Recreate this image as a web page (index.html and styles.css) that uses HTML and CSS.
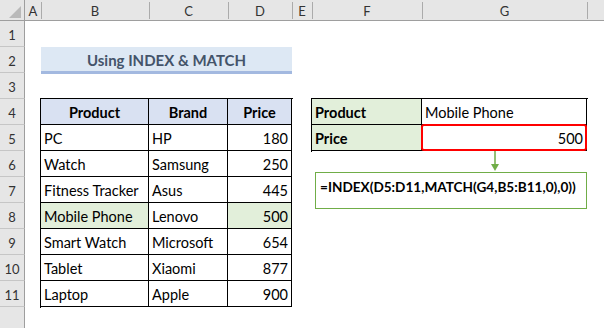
FILE: index.html
```html
<!DOCTYPE html>
<html>
<head>
<meta charset="utf-8">
<link rel="stylesheet" href="styles.css">
</head>
<body>
<div class="sheet">
  <div class="corner"><svg width="25" height="21" viewBox="0 0 25 21"><polygon points="21,6 21,18 9,18" fill="#b9b9b9"/></svg></div>
  <div class="ch">A</div>
  <div class="ch">B</div>
  <div class="ch">C</div>
  <div class="ch">D</div>
  <div class="ch">E</div>
  <div class="ch">F</div>
  <div class="ch">G</div>
  <div class="ch last"></div>

  <div class="rh r1">1</div>
  <div class="rh r2">2</div>
  <div class="rh r3">3</div>
  <div class="rh r4">4</div>
  <div class="rh r5">5</div>
  <div class="rh r6">6</div>
  <div class="rh r7">7</div>
  <div class="rh r8">8</div>
  <div class="rh r9">9</div>
  <div class="rh r10">10</div>
  <div class="rh r11">11</div>
  <div class="rh r12"></div>

  <div class="title">Using INDEX &amp; MATCH</div>

  <div class="data">
    <div class="c hd">Product</div><div class="c hd">Brand</div><div class="c hd">Price</div>
    <div class="c">PC</div><div class="c">HP</div><div class="c num">180</div>
    <div class="c">Watch</div><div class="c">Samsung</div><div class="c num">250</div>
    <div class="c">Fitness Tracker</div><div class="c">Asus</div><div class="c num">445</div>
    <div class="c hl">Mobile Phone</div><div class="c">Lenovo</div><div class="c num hl">500</div>
    <div class="c">Smart Watch</div><div class="c">Microsoft</div><div class="c num">654</div>
    <div class="c">Tablet</div><div class="c">Xiaomi</div><div class="c num">877</div>
    <div class="c">Laptop</div><div class="c">Apple</div><div class="c num">900</div>
  </div>

  <div class="lookup">
    <div class="c lbl">Product</div><div class="c">Mobile Phone</div>
    <div class="c lbl">Price</div><div class="c num result">500</div>
  </div>

  <div class="arrow"><svg width="10" height="21" viewBox="0 0 10 21"><line x1="5" y1="0" x2="5" y2="14" stroke="#70ad47" stroke-width="1.5"/><polygon points="1,13 9,13 5,20" fill="#70ad47"/></svg></div>
  <div class="formula">=INDEX(D5:D11,MATCH(G4,B5:B11,0),0))</div>
</div>
</body>
</html>
```

FILE: styles.css
```css
html, body {
  margin: 0;
  padding: 0;
  background: #ffffff;
}
body {
  font-family: Lato, "Liberation Sans", sans-serif;
  color: #000;
}
.sheet {
  position: relative;
  width: 604px;
  height: 328px;
  overflow: hidden;
  display: grid;
  grid-template-columns: 25px 16px 108px 79px 64px 20px 110px 165px 1fr;
  grid-template-rows: 21px repeat(11, 26px) 1fr;
}
.corner {
  grid-column: 1;
  grid-row: 1;
  background: #e6e6e6;
  border-right: 1px solid #9e9e9e;
  border-bottom: 1px solid #9e9e9e;
  box-sizing: border-box;
}
.corner svg { display: block; }
.ch {
  position: relative;
  grid-row: 1;
  background: #e6e6e6;
  border-bottom: 1px solid #9e9e9e;
  box-sizing: border-box;
  display: flex;
  align-items: center;
  justify-content: center;
  font-size: 13px;
  color: #333;
  padding-top: 1px;
}
.ch::after {
  content: "";
  position: absolute;
  right: -1px;
  top: 2px;
  bottom: 1px;
  width: 1px;
  background: #ababab;
  z-index: 1;
}
.ch.last::after { display: none; }
.rh {
  grid-column: 1;
  background: #e6e6e6;
  border-right: 1px solid #9e9e9e;
  border-bottom: 1px solid #c6c6c6;
  box-sizing: border-box;
  display: flex;
  align-items: center;
  justify-content: center;
  font-size: 13px;
  color: #333;
  padding-top: 2px;
}
.r1 { grid-row: 2; }
.r2 { grid-row: 3; }
.r3 { grid-row: 4; }
.r4 { grid-row: 5; }
.r5 { grid-row: 6; }
.r6 { grid-row: 7; }
.r7 { grid-row: 8; }
.r8 { grid-row: 9; }
.r9 { grid-row: 10; }
.r10 { grid-row: 11; }
.r11 { grid-row: 12; }
.r12 { grid-row: 13; border-bottom: none; }

.title {
  grid-column: 3 / 6;
  grid-row: 3;
  background: #dde8f4;
  border-bottom: 3px solid #a3b9e0;
  box-sizing: border-box;
  height: 27px;
  display: flex;
  align-items: center;
  justify-content: center;
  font-weight: bold;
  font-size: 15px;
  color: #44546a;
  padding-top: 2px;
}

.c {
  border-right: 1px solid #000;
  border-bottom: 1px solid #000;
  box-sizing: border-box;
  display: flex;
  align-items: center;
  padding: 2px 3px 0 3px;
  font-size: 14.5px;
  white-space: nowrap;
}
.num { justify-content: flex-end; }
.hd {
  background: #d9e1f2;
  font-weight: bold;
  justify-content: center;
}
.hl { background: #e2efda; }

.data {
  grid-column: 3 / 6;
  grid-row: 5 / 13;
  display: grid;
  grid-template-columns: 108px 79px 64px;
  grid-template-rows: repeat(8, 26px);
  border-left: 1px solid #000;
  border-top: 1px solid #000;
  margin-left: -1px;
  margin-top: -1px;
  width: 252px;
  height: 209px;
}
.lookup {
  grid-column: 7 / 9;
  grid-row: 5 / 7;
  display: grid;
  grid-template-columns: 110px 165px;
  grid-template-rows: 26px 26px;
  border-left: 1px solid #000;
  border-top: 1px solid #000;
  margin-left: -1px;
  margin-top: -1px;
  width: 276px;
  height: 53px;
}
.lbl {
  background: #e2efda;
  font-weight: bold;
}
.result {
  position: relative;
}
.result::after {
  content: "";
  position: absolute;
  left: -1px;
  top: -1px;
  right: -1px;
  bottom: -1px;
  border: 2px solid #ff0000;
  border-radius: 3px;
}
.arrow {
  position: absolute;
  left: 490px;
  top: 151px;
  width: 10px;
  height: 21px;
}
.arrow svg { display: block; }
.formula {
  position: absolute;
  left: 315px;
  top: 172px;
  width: 272px;
  height: 37px;
  box-sizing: border-box;
  border: 1.5px solid #70ad47;
  background: #fff;
  padding: 6px 0 0 4px;
  font-weight: bold;
  font-size: 13.6px;
  white-space: nowrap;
}
```
